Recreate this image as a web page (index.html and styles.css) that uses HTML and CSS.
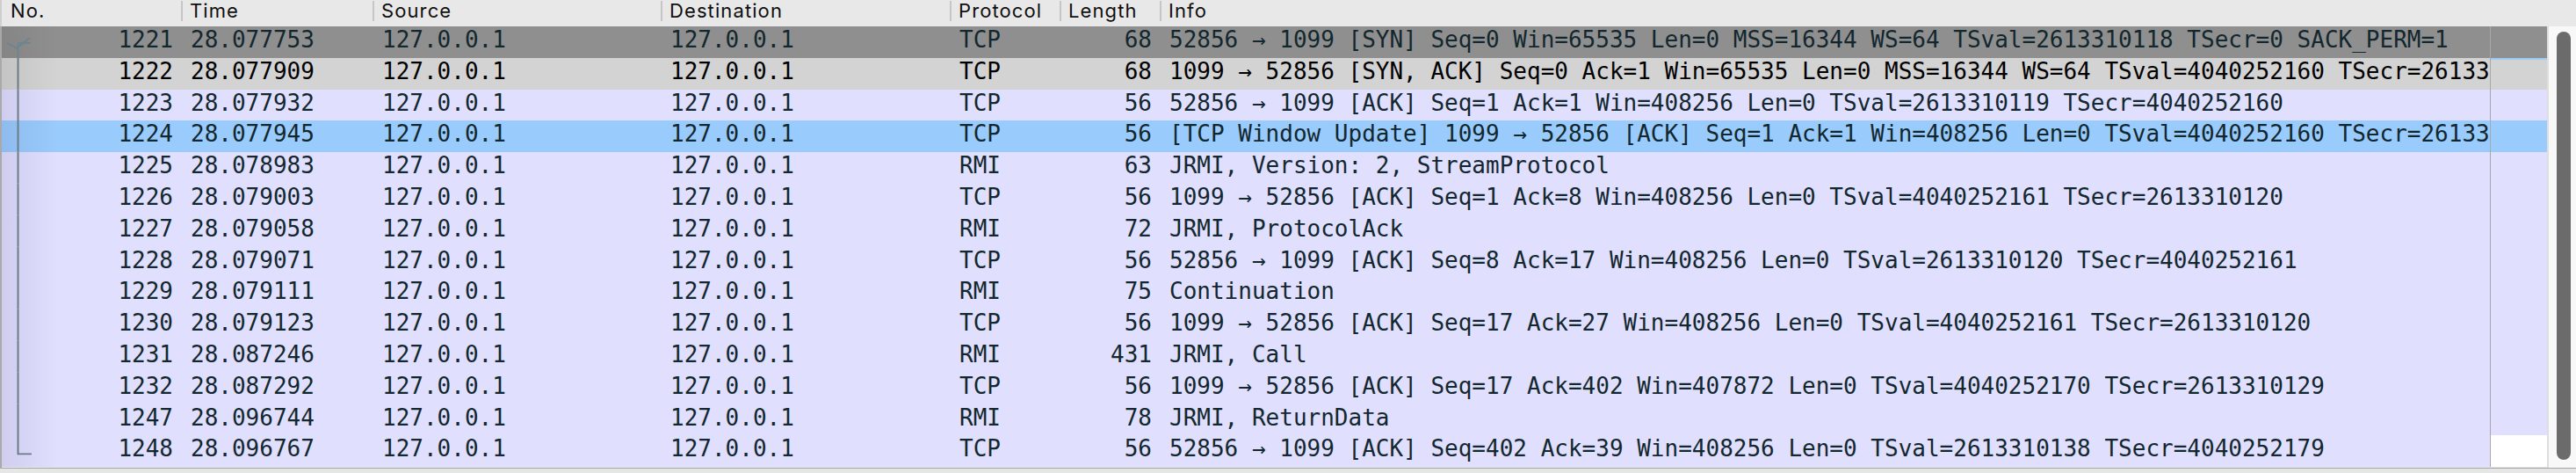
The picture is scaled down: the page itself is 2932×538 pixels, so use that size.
FILE: index.html
```html
<!DOCTYPE html>
<html>
<head>
<meta charset="utf-8">
<link rel="stylesheet" href="styles.css">
</head>
<body>
<div class="pane">
  <div class="head">
    <div class="hc c-no">No.</div>
    <div class="hc c-time sep">Time</div>
    <div class="hc c-src sep">Source</div>
    <div class="hc c-dst sep">Destination</div>
    <div class="hc c-proto sep">Protocol</div>
    <div class="hc c-len sep">Length</div>
    <div class="hc c-info sep">Info</div>
    <div class="hc c-rest"></div>
  </div>
  <div class="main">
    <div class="list">
      <div class="row dark">
        <div class="cell c-no"><svg class="rel" viewBox="0 0 40 36"><polyline points="6,19 17,25 32,13" /><line x1="18" y1="19" x2="33" y2="19" /><line x1="18.5" y1="19" x2="18.5" y2="36" /></svg><span class="num">1221</span></div>
        <div class="cell c-time">28.077753</div>
        <div class="cell c-src">127.0.0.1</div>
        <div class="cell c-dst">127.0.0.1</div>
        <div class="cell c-proto">TCP</div>
        <div class="cell c-len">68</div>
        <div class="cell c-info">52856 → 1099 [SYN] Seq=0 Win=65535 Len=0 MSS=16344 WS=64 TSval=2613310118 TSecr=0 SACK_PERM=1</div>
        <div class="cell c-extra"></div>
      </div>
      <div class="row light">
        <div class="cell c-no"><svg class="rel" viewBox="0 0 40 36"><line x1="18.5" y1="0" x2="18.5" y2="36" /></svg><span class="num">1222</span></div>
        <div class="cell c-time">28.077909</div>
        <div class="cell c-src">127.0.0.1</div>
        <div class="cell c-dst">127.0.0.1</div>
        <div class="cell c-proto">TCP</div>
        <div class="cell c-len">68</div>
        <div class="cell c-info">1099 → 52856 [SYN, ACK] Seq=0 Ack=1 Win=65535 Len=0 MSS=16344 WS=64 TSval=4040252160 TSecr=2613310118</div>
        <div class="cell c-extra first"></div>
      </div>
      <div class="row">
        <div class="cell c-no"><svg class="rel" viewBox="0 0 40 36"><line x1="18.5" y1="0" x2="18.5" y2="36" /></svg><span class="num">1223</span></div>
        <div class="cell c-time">28.077932</div>
        <div class="cell c-src">127.0.0.1</div>
        <div class="cell c-dst">127.0.0.1</div>
        <div class="cell c-proto">TCP</div>
        <div class="cell c-len">56</div>
        <div class="cell c-info">52856 → 1099 [ACK] Seq=1 Ack=1 Win=408256 Len=0 TSval=2613310119 TSecr=4040252160</div>
        <div class="cell c-extra"></div>
      </div>
      <div class="row sel">
        <div class="cell c-no"><svg class="rel" viewBox="0 0 40 36"><line x1="18.5" y1="0" x2="18.5" y2="36" /></svg><span class="num">1224</span></div>
        <div class="cell c-time">28.077945</div>
        <div class="cell c-src">127.0.0.1</div>
        <div class="cell c-dst">127.0.0.1</div>
        <div class="cell c-proto">TCP</div>
        <div class="cell c-len">56</div>
        <div class="cell c-info">[TCP Window Update] 1099 → 52856 [ACK] Seq=1 Ack=1 Win=408256 Len=0 TSval=4040252160 TSecr=2613310119</div>
        <div class="cell c-extra"></div>
      </div>
      <div class="row">
        <div class="cell c-no"><svg class="rel" viewBox="0 0 40 36"><line x1="18.5" y1="0" x2="18.5" y2="36" /></svg><span class="num">1225</span></div>
        <div class="cell c-time">28.078983</div>
        <div class="cell c-src">127.0.0.1</div>
        <div class="cell c-dst">127.0.0.1</div>
        <div class="cell c-proto">RMI</div>
        <div class="cell c-len">63</div>
        <div class="cell c-info">JRMI, Version: 2, StreamProtocol</div>
        <div class="cell c-extra"></div>
      </div>
      <div class="row">
        <div class="cell c-no"><svg class="rel" viewBox="0 0 40 36"><line x1="18.5" y1="0" x2="18.5" y2="36" /></svg><span class="num">1226</span></div>
        <div class="cell c-time">28.079003</div>
        <div class="cell c-src">127.0.0.1</div>
        <div class="cell c-dst">127.0.0.1</div>
        <div class="cell c-proto">TCP</div>
        <div class="cell c-len">56</div>
        <div class="cell c-info">1099 → 52856 [ACK] Seq=1 Ack=8 Win=408256 Len=0 TSval=4040252161 TSecr=2613310120</div>
        <div class="cell c-extra"></div>
      </div>
      <div class="row">
        <div class="cell c-no"><svg class="rel" viewBox="0 0 40 36"><line x1="18.5" y1="0" x2="18.5" y2="36" /></svg><span class="num">1227</span></div>
        <div class="cell c-time">28.079058</div>
        <div class="cell c-src">127.0.0.1</div>
        <div class="cell c-dst">127.0.0.1</div>
        <div class="cell c-proto">RMI</div>
        <div class="cell c-len">72</div>
        <div class="cell c-info">JRMI, ProtocolAck</div>
        <div class="cell c-extra"></div>
      </div>
      <div class="row">
        <div class="cell c-no"><svg class="rel" viewBox="0 0 40 36"><line x1="18.5" y1="0" x2="18.5" y2="36" /></svg><span class="num">1228</span></div>
        <div class="cell c-time">28.079071</div>
        <div class="cell c-src">127.0.0.1</div>
        <div class="cell c-dst">127.0.0.1</div>
        <div class="cell c-proto">TCP</div>
        <div class="cell c-len">56</div>
        <div class="cell c-info">52856 → 1099 [ACK] Seq=8 Ack=17 Win=408256 Len=0 TSval=2613310120 TSecr=4040252161</div>
        <div class="cell c-extra"></div>
      </div>
      <div class="row">
        <div class="cell c-no"><svg class="rel" viewBox="0 0 40 36"><line x1="18.5" y1="0" x2="18.5" y2="36" /></svg><span class="num">1229</span></div>
        <div class="cell c-time">28.079111</div>
        <div class="cell c-src">127.0.0.1</div>
        <div class="cell c-dst">127.0.0.1</div>
        <div class="cell c-proto">RMI</div>
        <div class="cell c-len">75</div>
        <div class="cell c-info">Continuation</div>
        <div class="cell c-extra"></div>
      </div>
      <div class="row">
        <div class="cell c-no"><svg class="rel" viewBox="0 0 40 36"><line x1="18.5" y1="0" x2="18.5" y2="36" /></svg><span class="num">1230</span></div>
        <div class="cell c-time">28.079123</div>
        <div class="cell c-src">127.0.0.1</div>
        <div class="cell c-dst">127.0.0.1</div>
        <div class="cell c-proto">TCP</div>
        <div class="cell c-len">56</div>
        <div class="cell c-info">1099 → 52856 [ACK] Seq=17 Ack=27 Win=408256 Len=0 TSval=4040252161 TSecr=2613310120</div>
        <div class="cell c-extra"></div>
      </div>
      <div class="row">
        <div class="cell c-no"><svg class="rel" viewBox="0 0 40 36"><line x1="18.5" y1="0" x2="18.5" y2="36" /></svg><span class="num">1231</span></div>
        <div class="cell c-time">28.087246</div>
        <div class="cell c-src">127.0.0.1</div>
        <div class="cell c-dst">127.0.0.1</div>
        <div class="cell c-proto">RMI</div>
        <div class="cell c-len">431</div>
        <div class="cell c-info">JRMI, Call</div>
        <div class="cell c-extra"></div>
      </div>
      <div class="row">
        <div class="cell c-no"><svg class="rel" viewBox="0 0 40 36"><line x1="18.5" y1="0" x2="18.5" y2="36" /></svg><span class="num">1232</span></div>
        <div class="cell c-time">28.087292</div>
        <div class="cell c-src">127.0.0.1</div>
        <div class="cell c-dst">127.0.0.1</div>
        <div class="cell c-proto">TCP</div>
        <div class="cell c-len">56</div>
        <div class="cell c-info">1099 → 52856 [ACK] Seq=17 Ack=402 Win=407872 Len=0 TSval=4040252170 TSecr=2613310129</div>
        <div class="cell c-extra"></div>
      </div>
      <div class="row">
        <div class="cell c-no"><svg class="rel" viewBox="0 0 40 36"><line x1="18.5" y1="0" x2="18.5" y2="36" /></svg><span class="num">1247</span></div>
        <div class="cell c-time">28.096744</div>
        <div class="cell c-src">127.0.0.1</div>
        <div class="cell c-dst">127.0.0.1</div>
        <div class="cell c-proto">RMI</div>
        <div class="cell c-len">78</div>
        <div class="cell c-info">JRMI, ReturnData</div>
        <div class="cell c-extra"></div>
      </div>
      <div class="row">
        <div class="cell c-no"><svg class="rel" viewBox="0 0 40 36"><polyline points="18.5,0 18.5,21.5 34,21.5" /></svg><span class="num">1248</span></div>
        <div class="cell c-time">28.096767</div>
        <div class="cell c-src">127.0.0.1</div>
        <div class="cell c-dst">127.0.0.1</div>
        <div class="cell c-proto">TCP</div>
        <div class="cell c-len">56</div>
        <div class="cell c-info">52856 → 1099 [ACK] Seq=402 Ack=39 Win=408256 Len=0 TSval=2613310138 TSecr=4040252179</div>
        <div class="cell c-extra blank"></div>
      </div>
    </div>
    <div class="vscroll"><div class="thumb"></div></div>
  </div>
</div>
</body>
</html>
```
FILE: styles.css
```css
html, body {
  margin: 0;
  padding: 0;
}
body {
  background: #e6e6e6;
  width: 2932px;
  height: 538px;
  overflow: hidden;
}
.pane {
  display: flex;
  flex-direction: column;
  width: 2932px;
}
.head {
  display: flex;
  height: 30px;
  background: #e8e8e8;
  border-left: 2px solid #cfcfcf;
  font-family: Inter, "Liberation Sans", sans-serif;
  font-size: 22px;
  letter-spacing: 1.1px;
  line-height: 25.4px;
  color: #0f0f0f;
}
.hc {
  flex: none;
  box-sizing: border-box;
  padding-left: 10px;
  white-space: nowrap;
  overflow: hidden;
}
.hc.sep {
  background: linear-gradient(#c6c6c6, #c6c6c6) left 0 top 1px / 2px 23px no-repeat;
}
.head .c-no { padding-left: 10px; }
.hc.c-rest { flex: 1; }

.c-no { width: 204px; }
.c-time { width: 218px; }
.c-src { width: 328px; }
.c-dst { width: 329px; }
.c-proto { width: 125px; }
.c-len { width: 114px; }
.c-info { width: 1514px; }

.main {
  display: flex;
  height: 503.2px;
  border-left: 2px solid #a9a9a9;
  border-bottom: 1.6px solid #a6a6a6;
  box-sizing: border-box;
}
.list {
  flex: none;
  width: 2897px;
  display: flex;
  flex-direction: column;
  overflow: hidden;
}
.row {
  display: flex;
  flex: none;
  height: 35.8px;
  background: #e0dffe;
  color: #12272e;
  font-family: "DejaVu Sans Mono", "Liberation Mono", monospace;
  font-size: 26px;
  line-height: 30.6px;
}
.row.dark { background: #8f8f8f; }
.row.light { background: #d3d3d3; color: #000; }
.row.sel { background: #99cbfc; }

.cell {
  flex: none;
  box-sizing: border-box;
  padding-left: 11px;
  white-space: pre;
  overflow: hidden;
}
.row .c-no {
  display: flex;
  padding-left: 0;
  padding-right: 9px;
  background: linear-gradient(to right, rgba(40, 30, 90, 0.09), rgba(40, 30, 90, 0) 64px);
}
.row.dark .c-no,
.row.light .c-no {
  background: linear-gradient(to right, rgba(0, 0, 0, 0.07), rgba(0, 0, 0, 0) 64px);
}
.num { margin-left: auto; }
.rel {
  flex: none;
  width: 40px;
  height: 35.8px;
  fill: none;
  stroke: #6b7b85;
  stroke-width: 2;
}
.row.dark .rel { stroke: #6e848e; }
.row .c-len {
  text-align: right;
  padding-left: 0;
  padding-right: 9px;
}
.c-extra {
  flex: none;
  width: 65px;
  border-left: 1px solid #a8a8a8;
  padding: 0;
}
.row .c-extra.first { box-shadow: inset 0 2px 0 #9dcbf8; }
.row .c-extra.blank { background: #ffffff; }

.vscroll {
  flex: none;
  width: 33px;
  box-sizing: border-box;
  border-left: 2px solid #dedede;
  background: #f8f8f8;
  padding: 6px 0 0 9px;
}
.thumb {
  width: 16px;
  height: 487px;
  border-radius: 8px;
  background: #6b6b6b;
}
```
